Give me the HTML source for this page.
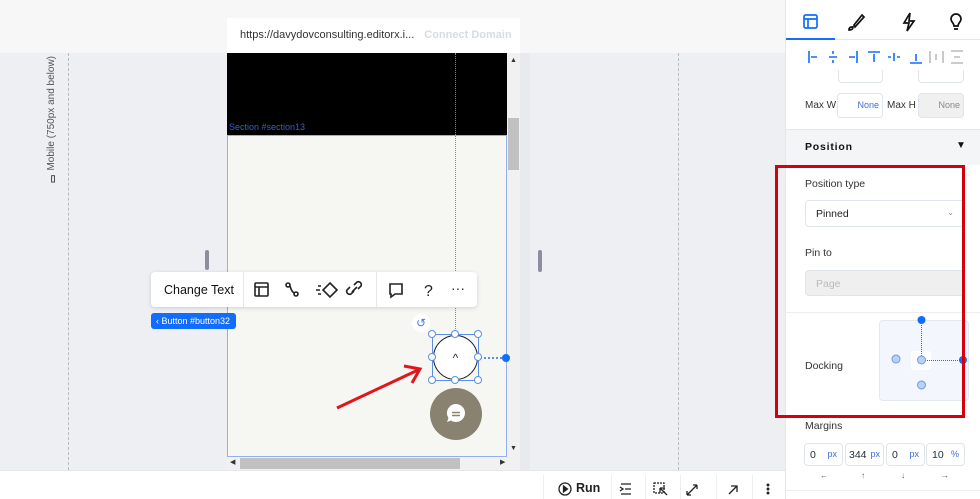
<!DOCTYPE html>
<html><head><style>
*{box-sizing:border-box;margin:0;padding:0}
body{width:980px;height:499px;position:relative;overflow:hidden;background:#f7f7f8;font-family:"Liberation Sans",sans-serif;color:#20303c}
.a{position:absolute}
.inp{position:absolute;border:1px solid #dfe5eb;border-radius:4px;background:#fff;font-size:11px}
</style></head><body>
<div class="a" style="left:0;top:53px;width:785px;height:417px;background:#eeeff3"></div>
<div class="a" style="left:68px;top:53px;height:417px;border-left:1px dashed #b8bac4"></div>
<div class="a" style="left:678px;top:53px;height:417px;border-left:1px dashed #b8bac4"></div>
<div class="a" style="left:46px;top:53px;width:14px;height:130px;display:flex;align-items:flex-end"><div style="writing-mode:vertical-rl;transform:rotate(180deg);font-size:10px;color:#555;white-space:nowrap"><b style="font-size:9px;color:#333">▯</b> Mobile (750px and below)</div></div>
<div class="a" style="left:205px;top:250px;width:4px;height:20px;background:#8c8ea0;border-radius:2px"></div>
<div class="a" style="left:538px;top:250px;width:4px;height:22px;background:#8c8ea0;border-radius:2px"></div>
<div class="a" style="left:520px;top:53px;width:10px;height:417px;background:#e9eaee"></div>
<div class="a" style="left:227px;top:18px;width:293px;height:35px;background:#fff;font-size:11px;line-height:35px;padding-left:13px;color:#333">https://davydovconsulting.editorx.i...<span style="color:#d6dbe4;font-weight:bold;margin-left:10px">Connect Domain</span></div>
<div class="a" style="left:227px;top:53px;width:280px;height:82px;background:#000"></div>
<div class="a" style="left:229px;top:122px;font-size:9px;color:#3060d0">Section #section13</div>
<div class="a" style="left:227px;top:135px;width:280px;height:322px;background:#f6f6f3;border:1px solid #8fb1ee"></div>
<div class="a" style="left:455px;top:53px;height:282px;border-left:1px dotted #5b8fe6"></div>
<div class="a" style="left:507px;top:53px;width:13px;height:404px;background:#f1f1f1"></div>
<div class="a" style="left:508px;top:118px;width:11px;height:52px;background:#c1c1c1"></div>
<div class="a" style="left:510px;top:57px;font-size:7px;color:#333">▲</div>
<div class="a" style="left:510px;top:445px;font-size:7px;color:#333">▼</div>
<div class="a" style="left:227px;top:457px;width:293px;height:13px;background:#f1f1f1"></div>
<div class="a" style="left:240px;top:458px;width:220px;height:11px;background:#c1c1c1"></div>
<div class="a" style="left:500px;top:458px;font-size:7px;color:#333">▶</div>
<div class="a" style="left:230px;top:458px;font-size:7px;color:#333">◀</div>
<div class="a" style="left:456px;top:357px;width:50px;border-top:2px dotted #5b8fe6"></div>
<div class="a" style="left:502px;top:354px;width:8px;height:8px;border-radius:50%;background:#116dff"></div>
<div class="a" style="left:432px;top:334px;width:47px;height:47px;border:1px solid #5b8fe6"></div>
<div class="a" style="left:433px;top:335px;width:45px;height:45px;border-radius:50%;border:1.5px solid #222;background:#fff;text-align:center;line-height:44px;font-size:12px">^</div>
<svg class="a" style="left:426px;top:328px" width="60" height="60"><g fill="#fff" stroke="#5b8fe6"><circle cx="6" cy="6" r="3.5"/><circle cx="29" cy="6" r="3.5"/><circle cx="52" cy="6" r="3.5"/><circle cx="6" cy="29" r="3.5"/><circle cx="52" cy="29" r="3.5"/><circle cx="6" cy="52" r="3.5"/><circle cx="29" cy="52" r="3.5"/><circle cx="52" cy="52" r="3.5"/></g></svg>
<div class="a" style="left:412px;top:314px;width:18px;height:18px;border-radius:50%;background:#fff;color:#3b7ef0;font-size:12px;text-align:center;line-height:18px">↺</div>
<div class="a" style="left:430px;top:388px;width:52px;height:52px;border-radius:50%;background:#8a8270"></div>
<svg class="a" style="left:443px;top:401px" width="26" height="26"><path d="M13 3a9 9 0 1 1-5 16.5L4 21l1.5-4A9 9 0 0 1 13 3z" fill="#fff"/><path d="M9 11.5h8M9 14.5h8" stroke="#8a8270" stroke-width="1.6"/></svg>
<svg class="a" style="left:330px;top:360px" width="100" height="55"><path d="M7 48L88 10" stroke="#e0161b" stroke-width="3"/><path d="M74 6L90 9L82 23" stroke="#e0161b" stroke-width="3" fill="none"/></svg>
<div class="a" style="left:151px;top:272px;width:326px;height:35px;background:#fff;border-radius:4px;box-shadow:0 1px 4px rgba(0,0,0,.15)"></div>
<div class="a" style="left:164px;top:283px;font-size:12.5px;color:#111">Change Text</div>
<div class="a" style="left:243px;top:272px;height:35px;border-left:1px solid #e8e8ec"></div>
<div class="a" style="left:376px;top:272px;height:35px;border-left:1px solid #e8e8ec"></div>
<svg class="a" style="left:250px;top:279px" width="220" height="22" fill="none" stroke="#222" stroke-width="1.6">
<rect x="5" y="4" width="13" height="13" rx="1"/><path d="M5 8h13M9 8v9"/>
<circle cx="38" cy="6" r="2"/><circle cx="46" cy="15" r="2"/><path d="M40 7q2 7 5 7"/>
<path d="M68 7h3M66 11h4M68 15h3"/><path d="M80 4l7 7-7 7-7-7z"/>
<path d="M104 12l-3 3a3 3 0 0 1-4-4l3-3M108 10l3-3a3 3 0 0 0-4-4l-3 3M102 13l5-5"/>
<path d="M140 5h12v10h-7l-4 3v-3h-1z"/>
<text x="174" y="17" font-size="16" fill="#222" stroke="none" font-family="Liberation Sans">?</text>
<text x="201" y="14" font-size="14" fill="#222" stroke="none" font-family="Liberation Sans">···</text>
</svg>
<div class="a" style="left:151px;top:313px;width:85px;height:16px;background:#116dff;border-radius:3px;color:#fff;font-size:9px;line-height:16px;padding-left:5px">‹ Button #button32</div>
<div class="a" style="left:0;top:470px;width:785px;height:29px;background:#fff;border-top:1px solid #e5e7eb"></div>
<div class="a" style="left:543px;top:475px;height:24px;border-left:1px solid #eceef1"></div>
<div class="a" style="left:611px;top:475px;height:24px;border-left:1px solid #eceef1"></div>
<div class="a" style="left:645px;top:475px;height:24px;border-left:1px solid #eceef1"></div>
<div class="a" style="left:680px;top:475px;height:24px;border-left:1px solid #eceef1"></div>
<div class="a" style="left:716px;top:475px;height:24px;border-left:1px solid #eceef1"></div>
<div class="a" style="left:752px;top:475px;height:24px;border-left:1px solid #eceef1"></div>
<svg class="a" style="left:556px;top:478px" width="220" height="20" fill="none" stroke="#222" stroke-width="1.3">
<circle cx="9" cy="11" r="6"/><path d="M7.5 8v6l4-3z" fill="#222"/>
<path d="M65 6h10M69 11h6M65 16h10M64 9l3 2-3 2"/>
<rect x="98" y="5" width="10" height="10" stroke-dasharray="2 1"/><path d="M104 10l7 7M104 10v5M104 10h5"/>
<path d="M131 17l10-10M131 17v-4M131 17h4M141 7v4M141 7h-4"/>
<path d="M173 16l8-8M175 8h6v6"/>
<circle cx="212" cy="7" r=".8" fill="#222"/><circle cx="212" cy="11" r=".8" fill="#222"/><circle cx="212" cy="15" r=".8" fill="#222"/>
</svg>
<div class="a" style="left:576px;top:481px;font-size:12.5px;font-weight:bold;color:#222">Run</div>
<!-- right panel -->
<div class="a" style="left:785px;top:0;width:195px;height:499px;background:#fff;border-left:1px solid #e5e7eb"></div>
<div class="inp" style="left:838px;top:70px;width:45px;height:13px;border-top:none;border-radius:0 0 4px 4px"></div>
<div class="inp" style="left:918px;top:70px;width:46px;height:13px;border-top:none;border-radius:0 0 4px 4px"></div>
<div class="a" style="left:785px;top:39px;width:195px;border-top:1px solid #e5e7eb"></div>
<div class="a" style="left:786px;top:38px;width:49px;height:2px;background:#116dff"></div>
<svg class="a" style="left:800px;top:10px" width="180" height="24" fill="none" stroke-width="1.7">
<g stroke="#116dff"><rect x="4" y="5" width="13" height="13" rx="1.5"/><path d="M4 9h13M8 9v9"/></g>
<g stroke="#111"><path d="M52 17c-2 0-3 1-3 3 3 0 4-1 4-3zM54 15l8-10 2 2-9 10z"/>
<path d="M110 3l-6 10h5l-2 8 7-10h-5z"/>
<path d="M154 16c0-3-3-4-3-7a5 5 0 0 1 10 0c0 3-3 4-3 7zM154 19h4"/></g>
</svg>
<svg class="a" style="left:800px;top:48px" width="180" height="18" stroke-width="1.6" fill="none">
<g stroke="#116dff">
<path d="M9 3v12M11 9h6"/>
<path d="M33 3v3M33 12v3M29 9h8"/>
<path d="M57 3v12M49 9h6"/>
<path d="M68 4h12M74 6v8"/>
<path d="M88 9h3M97 9h3M94 5v8"/>
<path d="M110 15h12M116 6v7"/></g>
<g stroke="#bbb"><path d="M130 3v12M143 3v12M136 6v6"/><path d="M151 3h12M151 15h12M154 9h6"/></g>
</svg>
<div class="a" style="left:805px;top:100px;font-size:10px;color:#333">Max W</div>
<div class="inp" style="left:837px;top:93px;width:46px;height:25px;color:#3b6fd8;font-size:9px;text-align:right;padding:6px 3px">None</div>
<div class="a" style="left:887px;top:100px;font-size:10px;color:#333">Max H</div>
<div class="inp" style="left:918px;top:93px;width:46px;height:25px;background:#f0f0f0;color:#888;font-size:9px;text-align:right;padding:6px 3px">None</div>
<div class="a" style="left:786px;top:129px;width:194px;height:36px;background:#f4f5f7;border-top:1px solid #e5e7eb"></div>
<div class="a" style="left:805px;top:141px;font-size:10.5px;font-weight:bold;letter-spacing:.8px;color:#111">Position</div>
<div class="a" style="left:956px;top:140px;font-size:10px;color:#111">▼</div>
<div class="a" style="left:805px;top:178px;font-size:10.5px;color:#333">Position type</div>
<div class="inp" style="left:805px;top:200px;width:160px;height:27px;padding:7px 10px;font-size:10.5px;color:#222">Pinned<span style="float:right;color:#888;font-size:8px">⌄</span></div>
<div class="a" style="left:805px;top:247px;font-size:10.5px;color:#333">Pin to</div>
<div class="inp" style="left:805px;top:270px;width:160px;height:26px;background:#efefef;padding:7px 10px;font-size:10.5px;color:#bbb">Page</div>
<div class="a" style="left:786px;top:312px;width:194px;border-top:1px solid #eceef1"></div>
<div class="a" style="left:805px;top:360px;font-size:10.5px;color:#333">Docking</div>
<div class="a" style="left:879px;top:320px;width:90px;height:81px;background:#f3f6fd;border:1px solid #e3e8f2;border-radius:4px"></div>
<div class="a" style="left:911px;top:351px;width:20px;height:19px;background:#fff;border-radius:3px"></div>
<div class="a" style="left:921px;top:320px;height:40px;border-left:1.5px dotted #116dff"></div>
<div class="a" style="left:921px;top:360px;width:45px;border-top:1.5px dotted #116dff"></div>
<svg class="a" style="left:885px;top:312px" width="95" height="80"><g fill="#116dff"><circle cx="36.5" cy="8" r="4"/><circle cx="78" cy="48" r="4"/></g><g fill="#b9d0f7" stroke="#6a9ae8"><circle cx="11" cy="47" r="4"/><circle cx="36.5" cy="48" r="4"/><circle cx="36.5" cy="73" r="4"/></g></svg>
<div class="a" style="left:775px;top:165px;width:190px;height:253px;border:3px solid #d4000d"></div>
<div class="a" style="left:805px;top:420px;font-size:10.5px;color:#333">Margins</div>
<div class="inp" style="left:804px;top:443px;width:39px;height:23px;padding:5px 5px;font-size:10.5px">0<span style="float:right;color:#3b6fd8;font-size:9px">px</span></div>
<div class="inp" style="left:845px;top:443px;width:39px;height:23px;padding:5px 3px;font-size:10.5px">344<span style="float:right;color:#3b6fd8;font-size:9px">px</span></div>
<div class="inp" style="left:886px;top:443px;width:39px;height:23px;padding:5px 5px;font-size:10.5px">0<span style="float:right;color:#3b6fd8;font-size:9px">px</span></div>
<div class="inp" style="left:926px;top:443px;width:39px;height:23px;padding:5px 5px;font-size:10.5px">10<span style="float:right;color:#3b6fd8;font-size:9px">%</span></div>
<div class="a" style="left:820px;top:471px;font-size:8px;color:#555">←</div>
<div class="a" style="left:861px;top:471px;font-size:8px;color:#555">↑</div>
<div class="a" style="left:901px;top:471px;font-size:8px;color:#555">↓</div>
<div class="a" style="left:941px;top:471px;font-size:8px;color:#555">→</div>
<div class="a" style="left:786px;top:490px;width:194px;border-top:1px solid #eceef1"></div>
</body></html>
